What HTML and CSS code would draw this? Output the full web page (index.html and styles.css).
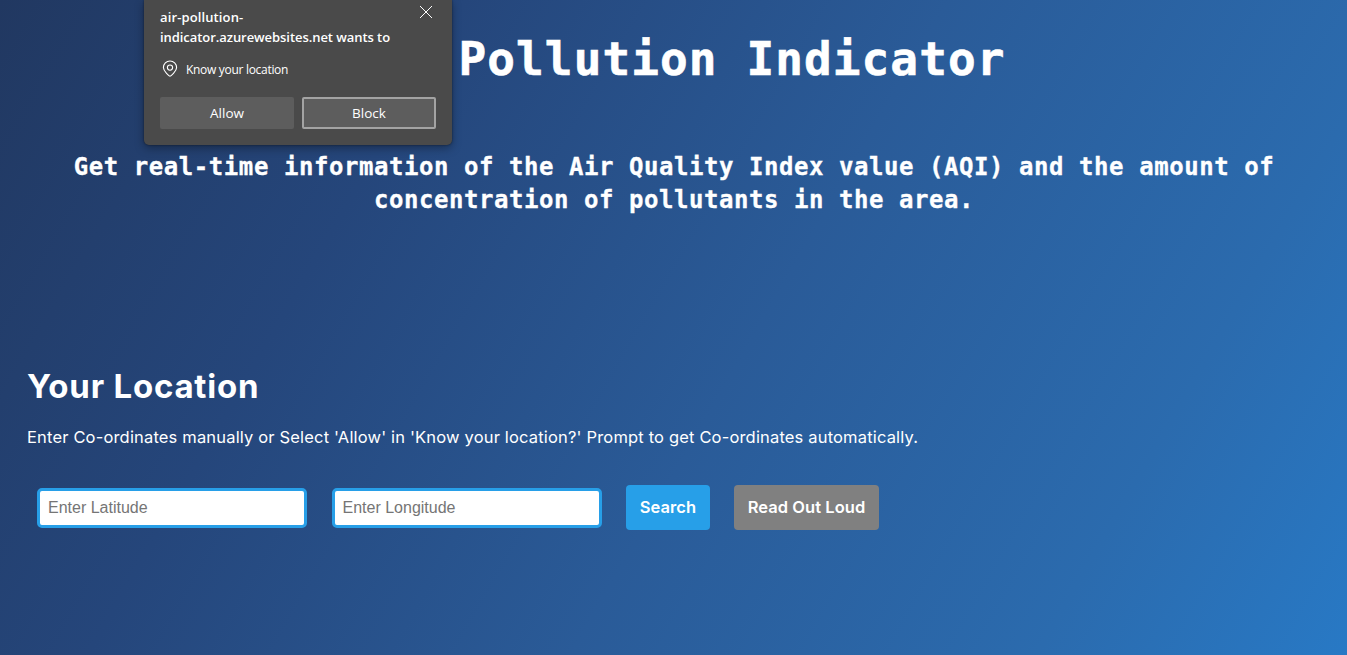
FILE: index.html
```html
<!DOCTYPE html>
<html lang="en">
<head>
<meta charset="utf-8">
<title>Air Pollution Indicator</title>
<link rel="stylesheet" href="styles.css">
</head>
<body>
<header class="hero">
  <h1 class="title">Pollution Indicator</h1>
  <h2 class="tagline">Get real-time information of the Air Quality Index value (AQI) and the amount of<br>concentration of pollutants in the area.</h2>
</header>
<main class="location">
  <h2 class="heading">Your Location</h2>
  <p class="hint">Enter Co-ordinates manually or Select 'Allow' in 'Know your location?' Prompt to get Co-ordinates automatically.</p>
  <form class="controls">
    <input class="field" type="text" placeholder="Enter Latitude">
    <input class="field" type="text" placeholder="Enter Longitude">
    <button class="btn search" type="button">Search</button>
    <button class="btn read" type="button">Read Out Loud</button>
  </form>
</main>
<aside class="prompt">
  <svg class="close" width="14" height="14" viewBox="0 0 14 14"><path d="M1 1 13 13M13 1 1 13" fill="none" stroke="#fff" stroke-width="1"/></svg>
  <p class="origin"><span class="host">air-pollution-</span><br>indicator.azurewebsites.net wants to</p>
  <div class="permission">
    <svg width="16" height="18" viewBox="0 0 16 18"><g fill="none" stroke="#fff" stroke-width="1.1"><path d="M8 16.300C7.500 16.300 1.400 11.600 1.400 7.600a6.600 6.600 0 0 1 13.200 0C14.600 11.600 8.500 16.300 8 16.300Z"/><circle cx="8" cy="7.600" r="2.600"/></g></svg>
    <span>Know your location</span>
  </div>
  <div class="choices">
    <button class="choice" type="button">Allow</button>
    <button class="choice focused" type="button">Block</button>
  </div>
</aside>
</body>
</html>
```

FILE: styles.css
```css
* { box-sizing: border-box; }
body {
  margin: 0;
  height: 655px;
  overflow: hidden;
  position: relative;
  color: #fff;
  background: linear-gradient(120deg, #213861 0%, #25467b 27%, #2a5b98 55%, #2b6bae 82%, #2879c5 100%);
  font-family: Inter, sans-serif;
}
h1, h2, p { margin: 0; font-weight: bold; }
.hero {
  height: 357px;
  padding-top: 29px;
  text-align: center;
  font-family: "DejaVu Sans Mono", monospace;
}
.title { padding-left: 117px; font-size: 46px; line-height: 60px; letter-spacing: 1.1px; -webkit-text-stroke: .6px #fff; }
.tagline { margin-top: 62px; padding-left: 1px; font-size: 24px; line-height: 33px; letter-spacing: .555px; white-space: nowrap; -webkit-text-stroke: .3px #fff; }
.location { padding: 0 27px; }
.heading { font-size: 33px; line-height: 58px; letter-spacing: .78px; white-space: nowrap; }
.hint { margin-top: 10px; font-size: 16.500px; line-height: 24px; font-weight: normal; letter-spacing: .17px; white-space: nowrap; }
.controls { display: flex; align-items: center; margin-top: 36px; padding-left: 10px; }
.field {
  width: 270px;
  height: 40px;
  margin: 0 24.500px 0 0;
  padding: 0 8px;
  border: 3px solid #279fe8;
  border-radius: 5px;
  background: #fff;
  font: 16px "Liberation Sans", Arial, sans-serif;
}
.field::placeholder { color: #757575; }
.btn {
  height: 45px;
  padding: 0 0 1px;
  border: 0;
  border-radius: 4px;
  color: #fff;
  font: 600 16.500px Inter, sans-serif;
  letter-spacing: .05px;
  white-space: nowrap;
}
.search { width: 84px; background: #279fe8; }
.read { width: 145px; margin-left: 24px; background: #808080; }
.prompt {
  position: absolute;
  left: 144px;
  top: 0;
  width: 308px;
  height: 145px;
  padding: 7px 16px;
  border-radius: 0 0 5px 5px;
  background: #4a4a4a;
  box-shadow: 0 0 2px rgba(0,0,0,.5), 0 3px 10px rgba(0,0,0,.35);
  font-family: "Open Sans", sans-serif;
}
.close { position: absolute; left: 275px; top: 5px; }
.origin { font-size: 13px; line-height: 20px; font-weight: 600; letter-spacing: -.06px; white-space: nowrap; }
.host { letter-spacing: .12px; }
.permission { display: flex; align-items: center; gap: 8px; height: 20px; margin-top: 12px; padding-left: 2px; font-size: 12px; letter-spacing: -.3px; }
.choices { display: flex; gap: 8px; margin-top: 18px; }
.choice {
  width: 134px;
  height: 32px;
  padding: 0;
  border: 0;
  border-radius: 2px;
  background: #5d5d5d;
  color: #fff;
  font: 13.500px "Open Sans", sans-serif;
}
.focused { border: 2px solid #a3a3a3; }
```
